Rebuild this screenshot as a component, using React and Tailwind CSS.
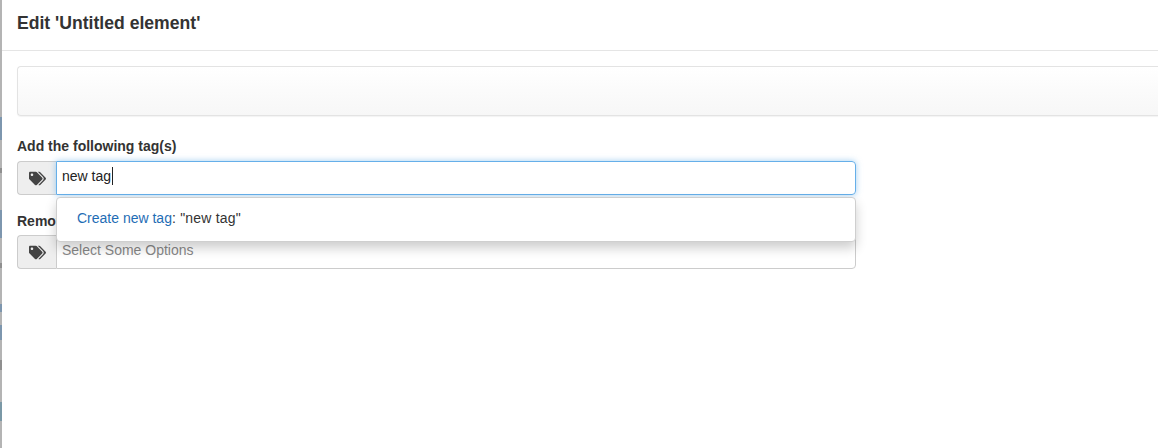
import { FaTags } from "react-icons/fa";

// what shows through at the modal's left edge: [height, colour]
const edgeBands = [
  [117, "#b4b4b4"],
  [23, "#7d96ae"],
  [28, "#b4b4b4"],
  [5, "#8f8f8f"],
  [37, "#b4b4b4"],
  [28, "#7d96ae"],
  [25, "#b4b4b4"],
  [5, "#8f8f8f"],
  [36, "#b4b4b4"],
  [8, "#7d96ae"],
  [13, "#b4b4b4"],
  [15, "#7d96ae"],
  [20, "#b4b4b4"],
  [10, "#8f8f8f"],
  [32, "#b4b4b4"],
  [19, "#7a98a6"],
  [27, "#b4b4b4"],
];

function TagAddon() {
  return (
    <span className="flex w-[39px] shrink-0 items-center justify-center rounded-l-[4px] border border-r-0 border-[#cccccc] bg-[#eeeeee] pl-[1px] text-[#444444]">
      <FaTags size={17} />
    </span>
  );
}

export default function App() {
  return (
    <div className="flex h-[448px] w-[1158px] overflow-hidden bg-white font-['Liberation_Sans',Arial,sans-serif] text-[14px] text-[#333333]">
      {/* modal edge, page shows through a bit */}
      <div className="flex w-[2px] shrink-0 flex-col">
        {edgeBands.map(([height, color], i) => (
          <div key={i} style={{ height, backgroundColor: color }} />
        ))}
      </div>

      <div className="min-w-0 flex-1">
        {/* Header */}
        <div className="flex h-[51px] items-center border-b border-[#e5e5e5] pb-[4px] pl-[15px]">
          <h4 className="text-[17.6px] leading-[20px] font-bold text-[#333333]">Edit 'Untitled element'</h4>
        </div>

        <div className="pt-[15px] pl-[15px]">
          {/* Empty well */}
          <div className="h-[50px] rounded-l-[4px] border border-r-0 border-[#e3e3e3] bg-gradient-to-b from-white to-[#f7f7f7] shadow-[0_1px_1px_rgba(0,0,0,0.05)]" />

          {/* Add tags */}
          <label className="mt-[20px] mb-[5px] block h-[20px] text-[14px] leading-[20px] font-bold">Add the following tag(s)</label>
          <div className="relative w-[839px]">
            <div className="flex h-[34px]">
              <TagAddon />
              <div className="flex flex-1 items-center rounded-r-[4px] border border-[#66afe9] pb-[4px] pl-[5px] text-[14px] text-[#222222] shadow-[0_0_6px_rgba(102,175,233,0.6)]">
                new tag
                <span className="ml-px h-[18px] w-px bg-[#222222]" />
              </div>
            </div>

            {/* Dropdown results */}
            <div className="absolute top-[36px] right-0 left-[39px] z-10 flex h-[45px] items-center rounded-[4px] border border-[#cfcfcf] bg-white pb-[3px] pl-[20px] shadow-[0_6px_12px_rgba(0,0,0,0.2)]">
              <span className="text-[#1f6db5]">Create new tag</span>
              <span className="tracking-[0.2px] text-[#333333]">: "new tag"</span>
            </div>
          </div>

          {/* Remove tags */}
          <label className="mt-[16px] mb-[4px] block h-[20px] text-[14px] leading-[20px] font-bold">Remove the following tag(s)</label>
          <div className="flex h-[34px] w-[839px]">
            <TagAddon />
            <div className="flex flex-1 items-center rounded-r-[4px] border border-[#cccccc] pb-[3px] pl-[5px] text-[14px] text-[#888888]">
              Select Some Options
            </div>
          </div>
        </div>
      </div>
    </div>
  );
}
